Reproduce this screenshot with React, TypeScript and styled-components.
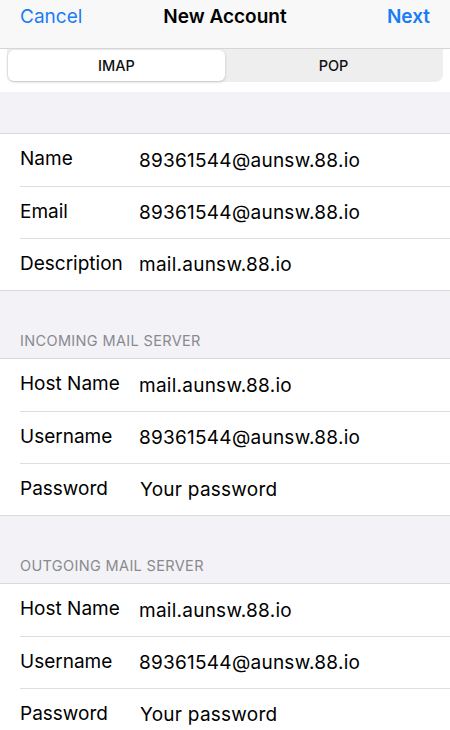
import styled, { createGlobalStyle } from 'styled-components';

const GlobalStyle = createGlobalStyle`
  html, body {
    margin: 0;
    padding: 0;
    background: #f2f2f7;
  }
  body {
    font-family: Inter, "Liberation Sans", Arial, sans-serif;
    -webkit-font-smoothing: antialiased;
  }
`;

const Page = styled.div`
  width: 450px;
  height: 730px;
  overflow: hidden;
  background: #f2f2f7;
`;

const NavBar = styled.div`
  height: 49px;
  background: #f8f8f8;
  border-bottom: 1px solid #d6d6d8;
  display: flex;
  align-items: flex-start;
  justify-content: space-between;
  padding: 5px 20px 0;
  box-sizing: border-box;
  position: relative;
`;

const NavButton = styled.span<{ $bold?: boolean }>`
  font-size: 19px;
  color: #1a7cf5;
  font-weight: ${({ $bold }) => ($bold ? 600 : 400)};
  line-height: 24px;
`;

const NavTitle = styled.span`
  position: absolute;
  left: 0;
  right: 0;
  top: 5px;
  text-align: center;
  font-size: 19px;
  font-weight: 600;
  color: #000;
  line-height: 24px;
  pointer-events: none;
`;

const SegmentWrap = styled.div`
  background: #fff;
  padding: 0 7px 10px;
`;

const Segmented = styled.div`
  height: 33px;
  background: #eeeeef;
  border-radius: 0 0 8px 8px;
  display: grid;
  grid-template-columns: 1fr 1fr;
  padding: 1px;
  box-sizing: border-box;
`;

const Segment = styled.div<{ $active?: boolean }>`
  display: flex;
  align-items: center;
  justify-content: center;
  font-size: 14.5px;
  font-weight: 500;
  color: #111;
  border-radius: 6px;
  background: ${({ $active }) => ($active ? '#fff' : 'transparent')};
  box-shadow: ${({ $active }) => ($active ? '0 1px 3px rgba(0,0,0,0.2)' : 'none')};
`;

const Spacer = styled.div<{ $h: number }>`
  height: ${({ $h }) => $h}px;
`;

const SectionHeader = styled.div`
  height: 67px;
  box-sizing: border-box;
  padding: 0 20px 9px;
  display: flex;
  align-items: flex-end;
  font-size: 14.5px;
  color: #8a8a8e;
  letter-spacing: 0.35px;
`;

const Group = styled.div`
  background: #fff;
  border-top: 1px solid #d9d9dc;
  border-bottom: 1px solid #d9d9dc;
`;

const Row = styled.div`
  height: 52px;
  box-sizing: border-box;
  display: flex;
  align-items: center;
  margin-left: 20px;
  & + & {
    border-top: 1px solid #dedee0;
  }
`;

const Label = styled.span`
  width: 119px;
  flex-shrink: 0;
  font-size: 19px;
  color: #000;
  margin-top: -3px;
`;

const Value = styled.span<{ $offset?: number }>`
  font-size: 19px;
  letter-spacing: 0.25px;
  color: #000;
  padding-left: ${({ $offset }) => $offset ?? 0}px;
`;

type Field = { label: string; value: string; offset?: number };

const account: Field[] = [
  { label: 'Name', value: '89361544@aunsw.88.io' },
  { label: 'Email', value: '89361544@aunsw.88.io' },
  { label: 'Description', value: 'mail.aunsw.88.io' },
];

const server: Field[] = [
  { label: 'Host Name', value: 'mail.aunsw.88.io' },
  { label: 'Username', value: '89361544@aunsw.88.io' },
  { label: 'Password', value: 'Your password', offset: 1 },
];

const FieldGroup = ({ fields }: { fields: Field[] }) => (
  <Group>
    {fields.map((f) => (
      <Row key={f.label}>
        <Label>{f.label}</Label>
        <Value $offset={f.offset}>{f.value}</Value>
      </Row>
    ))}
  </Group>
);

export default function App() {
  return (
    <Page>
      <GlobalStyle />
      <NavBar>
        <NavButton>Cancel</NavButton>
        <NavTitle>New Account</NavTitle>
        <NavButton $bold>Next</NavButton>
      </NavBar>
      <SegmentWrap>
        <Segmented>
          <Segment $active>IMAP</Segment>
          <Segment>POP</Segment>
        </Segmented>
      </SegmentWrap>
      <Spacer $h={41} />
      <FieldGroup fields={account} />
      <SectionHeader>INCOMING MAIL SERVER</SectionHeader>
      <FieldGroup fields={server} />
      <SectionHeader>OUTGOING MAIL SERVER</SectionHeader>
      <FieldGroup fields={server} />
    </Page>
  );
}
